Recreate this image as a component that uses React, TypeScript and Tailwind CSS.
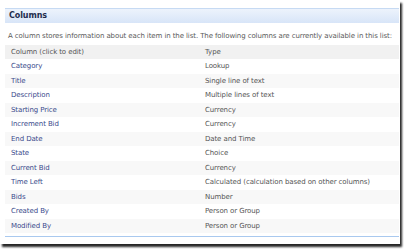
import React from 'react';

interface ColumnRow {
  name: string;
  type: string;
}

const rows: ColumnRow[] = [
  { name: 'Category', type: 'Lookup' },
  { name: 'Title', type: 'Single line of text' },
  { name: 'Description', type: 'Multiple lines of text' },
  { name: 'Starting Price', type: 'Currency' },
  { name: 'Increment Bid', type: 'Currency' },
  { name: 'End Date', type: 'Date and Time' },
  { name: 'State', type: 'Choice' },
  { name: 'Current Bid', type: 'Currency' },
  { name: 'Time Left', type: 'Calculated (calculation based on other columns)' },
  { name: 'Bids', type: 'Number' },
  { name: 'Created By', type: 'Person or Group' },
  { name: 'Modified By', type: 'Person or Group' },
];

const App: React.FC = () => {
  return (
    <div className="w-[404px] h-[249px] bg-white font-['DejaVu_Sans',sans-serif] text-[7px] tracking-[-0.1px]">
      <div className="w-[400px] h-[244px] bg-white shadow-[2px_3px_2px_rgba(0,0,0,0.85)] pt-[8px] pl-[5px] pr-[1px] flex flex-col">
        {/* Section header */}
        <div className="h-[15px] border-t border-[#c6daf3] bg-gradient-to-b from-[#edf3fc] to-[#d8e5f8] flex items-center pl-[4px]">
          <span className="font-bold text-[#1f2d4d] text-[8px]">Columns</span>
        </div>

        <p className="mt-[6px] pl-[3px] text-[#5a5a5a] leading-[14px]">
          A column stores information about each item in the list. The following columns are currently available in this list:
        </p>

        {/* Column table */}
        <div className="mt-[2px] flex flex-col">
          <div className="h-[14px] bg-[#f1f1f1] flex items-center pl-[6px] text-[#555]">
            <span className="w-[194px]">Column (click to edit)</span>
            <span>Type</span>
          </div>
          {rows.map((row, idx) => (
            <div
              key={row.name}
              className={`h-[14.5px] flex items-center pl-[6px] ${idx % 2 === 1 ? 'bg-[#f8f8f8]' : 'bg-white'}`}
            >
              <span className="w-[194px] text-[#3a4a8c]">{row.name}</span>
              <span className="text-[#555]">{row.type}</span>
            </div>
          ))}
          <div className="mt-[3px] h-px bg-[#a9c9ef]" />
        </div>
      </div>
    </div>
  );
};

export default App;
